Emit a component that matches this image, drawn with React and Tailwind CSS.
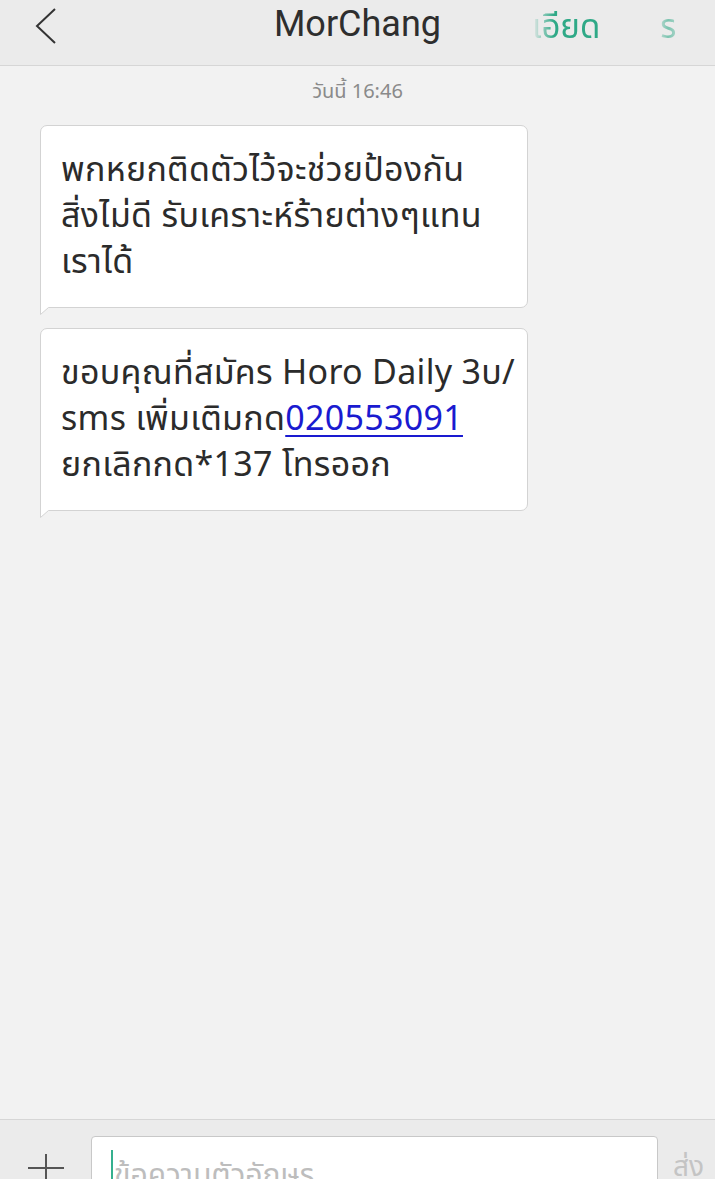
import React from "react";

const thai = { fontFamily: '"Noto Sans", "Noto Sans Thai", "DejaVu Sans", Roboto, sans-serif' };

function Bubble({ children }) {
  return (
    <div className="relative w-[488px]">
      <div className="whitespace-nowrap rounded-[7px] border border-[#d3d3d3] bg-white pl-[20px] pr-[4px] pt-[19px] pb-[24px] text-[34px] leading-[46px] tracking-[0.3px] text-[#2b2b2b]">
        {children}
      </div>
      <svg className="absolute left-0 top-full -mt-[8px]" width="16" height="16" viewBox="0 0 16 16">
        <path d="M0.5 0 L0.5 14.5 L9 7.5 L16 7.5 L16 0 Z" fill="#ffffff" />
        <path d="M0.5 0 L0.5 14.5 L8.5 7.5 L16 7.5" fill="none" stroke="#d3d3d3" strokeWidth="1" />
      </svg>
    </div>
  );
}

export default function App() {
  const mask =
    "linear-gradient(to right, transparent 0px, black 22px, black 80px, transparent 98px, transparent 122px, rgba(0,0,0,0.6) 136px, transparent 156px)";
  return (
    <div className="flex h-[1179px] w-[715px] flex-col overflow-hidden bg-[#f2f2f2]" style={thai}>
      <header className="relative flex h-[66px] shrink-0 items-start border-b border-[#d6d6d6] bg-[#ebebeb]">
        <svg className="absolute left-[34px] top-[8px]" width="24" height="36" viewBox="0 0 24 36">
          <path d="M21 1 L3 18 L21 35" fill="none" stroke="#333" strokeWidth="2" />
        </svg>
        <div className="flex-1 pt-[2px] text-center text-[36px] leading-[44px] text-[#2e2e2e]" style={{ fontFamily: 'Roboto, "Noto Sans", sans-serif' }}>
          MorChang
        </div>
        <div
          className="absolute left-[532px] top-[4px] flex h-[44px] w-[170px] items-center overflow-hidden text-[33px] text-[#2fa987]"
          style={{ WebkitMaskImage: mask, maskImage: mask }}
        >
          <span className="whitespace-nowrap">เอียด</span>
          <span className="ml-[60px] whitespace-nowrap">ร</span>
        </div>
      </header>

      <main className="flex flex-1 flex-col px-[40px]">
        <div className="-mx-[40px] pt-[10px] text-center text-[20px] text-[#8a8a8a]">วันนี้ 16:46</div>
        <div className="mt-[19px] flex flex-col gap-[20px]">
          <Bubble>
            พกหยกติดตัวไว้จะช่วยป้องกัน<br />
            สิ่งไม่ดี รับเคราะห์ร้ายต่างๆแทน<br />
            เราได้
          </Bubble>
          <Bubble>
            ขอบคุณที่สมัคร Horo Daily 3บ/<br />
            sms เพิ่มเติมกด<span className="text-[#1a1ad0] underline decoration-[2px] underline-offset-[5px]">020553091</span><br />
            ยกเลิกกด*137 โทรออก
          </Bubble>
        </div>
      </main>

      <footer className="flex h-[60px] shrink-0 items-start border-t border-[#d6d6d6] bg-[#ebebeb]">
        <div className="flex w-[91px] shrink-0 justify-center pt-[34px]">
          <svg width="36" height="30" viewBox="0 0 36 30">
            <path d="M0 14 L36 14 M18 0 L18 30" stroke="#555" strokeWidth="2" />
          </svg>
        </div>
        <div className="mt-[16px] flex h-[60px] w-[567px] shrink-0 items-start rounded-[4px] border border-[#c8c8c8] bg-white pl-[19px] pt-[13px]">
          <div className="h-[40px] w-[2px] bg-[#35b08e]" />
          <span className="ml-[1px] translate-y-[4px] text-[30px] leading-[40px] text-[#bdbdbd]">ข้อความตัวอักษร</span>
        </div>
        <div className="pl-[15px] pt-[24px] text-[28px] text-[#c4c4c4]">ส่ง</div>
      </footer>
    </div>
  );
}
